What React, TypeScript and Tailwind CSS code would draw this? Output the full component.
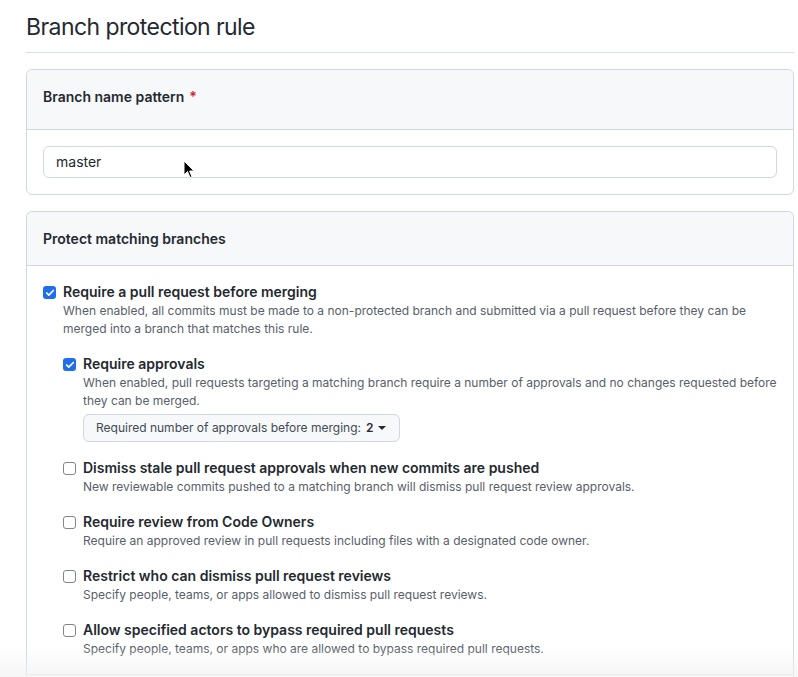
import { Check } from "lucide-react";

const FONT = { fontFamily: 'Inter, "Noto Sans", "Liberation Sans", sans-serif' };

type Rule = {
  label: string;
  desc: string[];
  checked?: boolean;
};

const subRules: Rule[] = [
  {
    label: "Dismiss stale pull request approvals when new commits are pushed",
    desc: ["New reviewable commits pushed to a matching branch will dismiss pull request review approvals."],
  },
  {
    label: "Require review from Code Owners",
    desc: ["Require an approved review in pull requests including files with a designated code owner."],
  },
  {
    label: "Restrict who can dismiss pull request reviews",
    desc: ["Specify people, teams, or apps allowed to dismiss pull request reviews."],
  },
  {
    label: "Allow specified actors to bypass required pull requests",
    desc: ["Specify people, teams, or apps who are allowed to bypass required pull requests."],
  },
];

function Box({ checked }: { checked?: boolean }) {
  if (checked) {
    return (
      <span className="mt-[4px] inline-flex h-[13px] w-[13px] shrink-0 items-center justify-center rounded-[3px] bg-[#1f6feb]">
        <Check className="h-[10px] w-[10px] text-white" strokeWidth={4} />
      </span>
    );
  }
  return <span className="mt-[4px] inline-block h-[13px] w-[13px] shrink-0 rounded-[3px] border border-[#7d8590] bg-white" />;
}

function RuleRow({ rule, children }: { rule: Rule; children?: React.ReactNode }) {
  return (
    <div className="flex gap-[7px]">
      <Box checked={rule.checked} />
      <div className="min-w-0 flex-1">
        <div className="text-[14px] font-semibold leading-[20px] text-[#24292f]">{rule.label}</div>
        <p className="text-[12px] leading-[18px] text-[#57606a]">
          {rule.desc.map((d) => (
            <span key={d}>{d}</span>
          ))}
        </p>
        {children}
      </div>
    </div>
  );
}

export default function App() {
  return (
    <div className="relative h-[677px] w-[798px] overflow-hidden bg-white" style={FONT}>
      <div className="ml-[26px] w-[768px]">
        <div className="border-b border-[#d8dee4] pt-[12px] pb-[10px]">
          <h1 className="text-[23px] font-normal leading-[30px] tracking-[-0.025em] text-[#24292f]">Branch protection rule</h1>
        </div>

        {/* Branch name pattern */}
        <div className="mt-[16px] rounded-[6px] border border-[#d0d7de]">
          <div className="flex h-[60px] items-start rounded-t-[6px] border-b border-[#d0d7de] bg-[#f6f8fa] px-[16px] pt-[17px]">
            <span className="text-[14px] font-semibold leading-[20px] text-[#24292f]">Branch name pattern</span>
            <span className="ml-[5px] text-[14px] font-semibold leading-[20px] text-[#cf222e]">*</span>
          </div>
          <div className="px-[16px] py-[16px]">
            <div className="flex h-[32px] items-center rounded-[6px] border border-[#d0d7de] bg-white px-[12px] pb-[1px] text-[14px] text-[#24292f]">
              master
            </div>
          </div>
        </div>

        {/* Protect matching branches */}
        <div className="mt-[16px] rounded-t-[6px] border-x border-t border-[#d0d7de]">
          <div className="flex h-[54px] items-center rounded-t-[6px] border-b border-[#d0d7de] bg-[#f6f8fa] px-[16px]">
            <span className="text-[14px] font-semibold text-[#24292f]">Protect matching branches</span>
          </div>
          <div className="border-b border-[#d0d7de] px-[16px] pt-[16px] pb-[16px]">
            <RuleRow
              rule={{
                label: "Require a pull request before merging",
                checked: true,
                desc: [
                  "When enabled, all commits must be made to a non-protected branch and submitted via a pull request before they can be merged into a branch that matches this rule.",
                ],
              }}
            >
              <div className="mt-[16px] flex flex-col gap-[16px]">
                <RuleRow
                  rule={{
                    label: "Require approvals",
                    checked: true,
                    desc: [
                      "When enabled, pull requests targeting a matching branch require a number of approvals and no changes requested before they can be merged.",
                    ],
                  }}
                >
                  <button className="mt-[4px] flex h-[28px] items-center rounded-[6px] border border-[#d0d7de] bg-[#f6f8fa] pl-[12px] pr-[13px] text-[12px] text-[#424a53]">
                    Required number of approvals before merging:
                    <span className="ml-[5px] font-semibold text-[#24292f]">2</span>
                    <span className="ml-[5px] inline-block h-0 w-0 border-x-[4px] border-t-[4px] border-x-transparent border-t-[#24292f]" />
                  </button>
                </RuleRow>
                {subRules.map((r) => (
                  <RuleRow key={r.label} rule={r} />
                ))}
              </div>
            </RuleRow>
          </div>
          <div className="h-[40px]" />
        </div>
      </div>

      {/* bottom fade */}
      <div className="pointer-events-none absolute inset-x-0 bottom-0 h-[30px] bg-gradient-to-b from-white/0 to-[#f3f3f3]/80" />

      {/* mouse cursor */}
      <svg className="absolute left-[183px] top-[160px]" width="12" height="19" viewBox="0 0 12 19">
        <path d="M1 1 L1 15 L4.5 11.5 L7 17.5 L9 16.7 L6.6 11 L11 11 Z" fill="#000" stroke="#fff" strokeWidth="1" strokeLinejoin="round" />
      </svg>
    </div>
  );
}
